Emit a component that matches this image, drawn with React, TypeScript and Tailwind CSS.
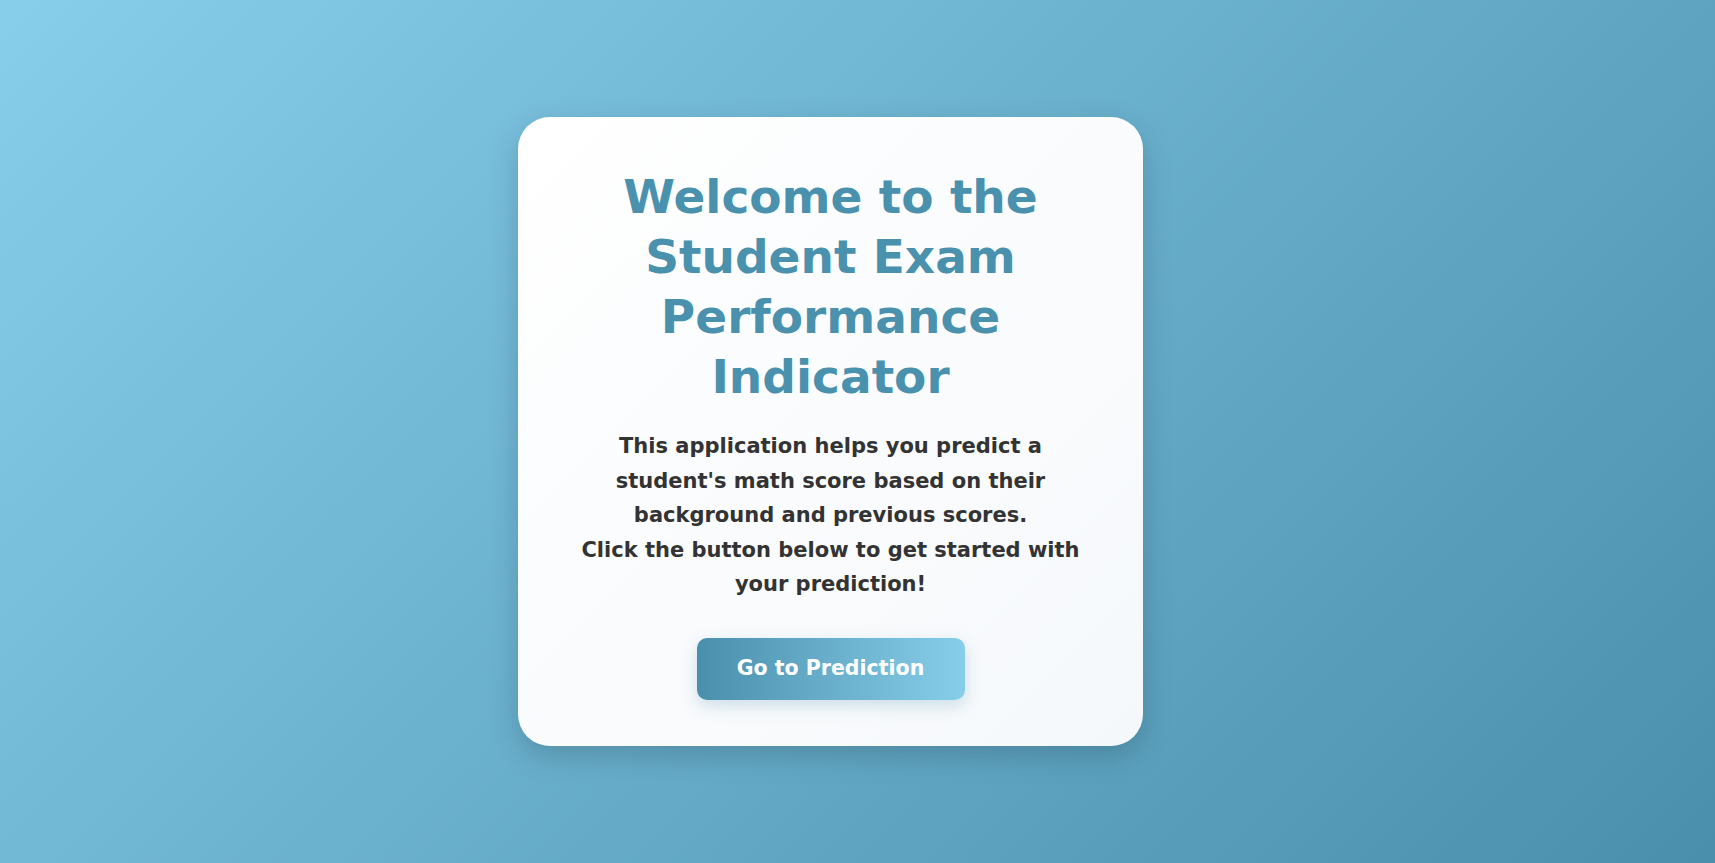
export default function App() {
  return (
    <div className="min-h-screen w-full flex items-center justify-center bg-[linear-gradient(135deg,#87ceeb,#4a90ad)] pr-[54px] font-['DejaVu_Sans','Liberation_Sans',sans-serif]">
      <div className="w-[625px] rounded-[32px] bg-[linear-gradient(135deg,#ffffff,#f5f8fb)] shadow-[0_10px_30px_rgba(0,0,0,0.18)] px-[30px] pt-[50px] pb-[46px] flex flex-col items-center text-center">
        <h1 className="text-[47px] leading-[60px] font-bold text-[#4a91ad]">
          Welcome to the
          <br />
          Student Exam
          <br />
          Performance
          <br />
          Indicator
        </h1>
        <p className="mt-[22px] text-[21px] leading-[34.5px] font-bold text-[#333333]">
          This application helps you predict a
          <br />
          student's math score based on their
          <br />
          background and previous scores.
          <br />
          Click the button below to get started with
          <br />
          your prediction!
        </p>
        <button className="mt-[36px] w-[268px] h-[62px] rounded-[10px] bg-[linear-gradient(90deg,#4a90ad,#87ceeb)] text-white text-[20.5px] font-bold shadow-[0_6px_16px_rgba(74,144,173,0.25)]">
          Go to Prediction
        </button>
      </div>
    </div>
  );
}
